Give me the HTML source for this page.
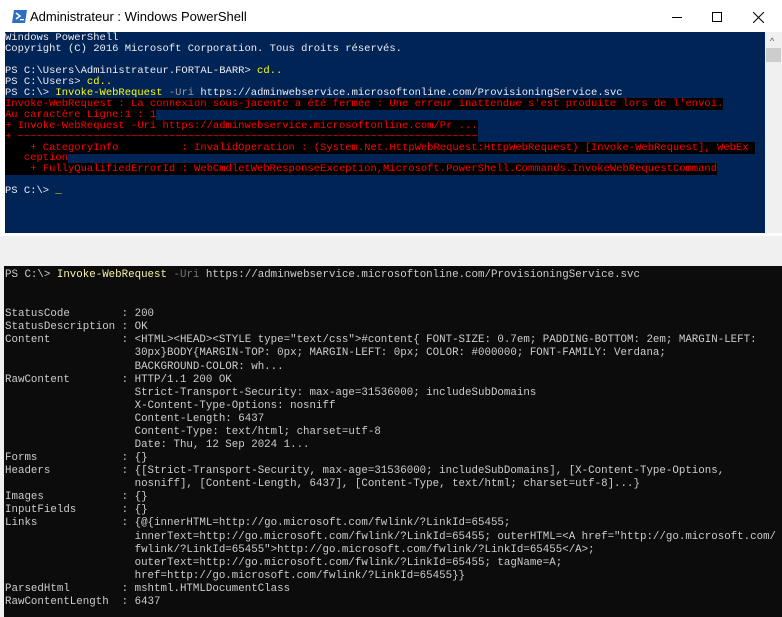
<!DOCTYPE html>
<html><head><meta charset="utf-8"><style>
*{margin:0;padding:0;box-sizing:border-box}
body{width:782px;height:617px;background:#f0f0f0;position:relative;overflow:hidden;font-family:"Liberation Mono",monospace}
#win{position:absolute;left:0;top:0;width:782px;height:236px;background:#fff}
#title{position:absolute;left:30px;top:9px;font:13px "Liberation Sans",sans-serif;color:#000}
#blue{position:absolute;left:5px;top:32px;width:760px;height:201px;background:#012456;overflow:hidden}
#sb{position:absolute;left:765px;top:32px;width:17px;height:201px;background:#f0f0f0}
#blue pre{position:absolute;left:0;top:1px;font-size:10.5px;line-height:10.95px;color:#eeedf0;white-space:pre;font-family:"Liberation Mono",monospace}
.y{color:#ffff00}.g{color:#9a9a9a}
.r{color:#ff0000;background:#000}
#black{position:absolute;left:4px;top:266px;width:778px;height:351px;background:#0c0c0c;overflow:hidden}
#black pre{position:absolute;left:1px;top:3px;font-size:10.8px;line-height:13.08px;color:#cccccc;white-space:pre;font-family:"Liberation Mono",monospace}
.by{color:#f9f1a5}.bg{color:#767676}
</style></head><body>
<div id="win">
<svg style="position:absolute;left:12px;top:10px" width="15" height="13" viewBox="0 0 15 13"><polygon points="2,0 15,0 13,13 0,13" fill="#2f6fc0"/><path d="M4 3 L8 6 L4 9" stroke="#fff" stroke-width="1.5" fill="none"/><rect x="8" y="9" width="4" height="1.3" fill="#fff"/></svg>
<div id="title">Administrateur : Windows PowerShell</div>
<div style="position:absolute;left:672px;top:17px;width:10px;height:1px;background:#000"></div>
<div style="position:absolute;left:712px;top:12px;width:10px;height:10px;border:1px solid #000"></div>
<svg style="position:absolute;left:753px;top:12px" width="11" height="11"><path d="M0 0L11 11M11 0L0 11" stroke="#000" stroke-width="1"/></svg>
<div id="blue"><pre>Windows PowerShell
Copyright (C) 2016 Microsoft Corporation. Tous droits réservés.

PS C:\Users\Administrateur.FORTAL-BARR&gt; <span class="y">cd..</span>
PS C:\Users&gt; <span class="y">cd..</span>
PS C:\&gt; <span class="y">Invoke-WebRequest</span> <span class="g">-Uri</span> https://adminwebservice.microsoftonline.com/ProvisioningService.svc
<span class="r">Invoke-WebRequest : La connexion sous-jacente a été fermée : Une erreur inattendue s'est produite lors de l'envoi.</span>
<span class="r">Au caractère Ligne:1 : 1</span>
<span class="r">+ Invoke-WebRequest -Uri https://adminwebservice.microsoftonline.com/Pr ...</span>
<span class="r">+ ~~~~~~~~~~~~~~~~~~~~~~~~~~~~~~~~~~~~~~~~~~~~~~~~~~~~~~~~~~~~~~~~~~~~~~~~~</span>
<span class="r">    + CategoryInfo          : InvalidOperation : (System.Net.HttpWebRequest:HttpWebRequest) [Invoke-WebRequest], WebEx </span>
<span class="r">   ception</span>
<span class="r">    + FullyQualifiedErrorId : WebCmdletWebResponseException,Microsoft.PowerShell.Commands.InvokeWebRequestCommand</span>

PS C:\&gt; <span class="y">_</span></pre></div>
<div id="sb"><div style="position:absolute;left:5px;top:4px;font:9px 'Liberation Sans';color:#555">^</div><div style="position:absolute;left:1px;top:16px;width:15px;height:14px;background:#cdcdcd"></div></div>
</div>
<div id="black"><pre>PS C:\&gt; <span class="by">Invoke-WebRequest</span> <span class="bg">-Uri</span> https://adminwebservice.microsoftonline.com/ProvisioningService.svc


StatusCode        : 200
StatusDescription : OK
Content           : &lt;HTML&gt;&lt;HEAD&gt;&lt;STYLE type="text/css"&gt;#content{ FONT-SIZE: 0.7em; PADDING-BOTTOM: 2em; MARGIN-LEFT:
                    30px}BODY{MARGIN-TOP: 0px; MARGIN-LEFT: 0px; COLOR: #000000; FONT-FAMILY: Verdana;
                    BACKGROUND-COLOR: wh...
RawContent        : HTTP/1.1 200 OK
                    Strict-Transport-Security: max-age=31536000; includeSubDomains
                    X-Content-Type-Options: nosniff
                    Content-Length: 6437
                    Content-Type: text/html; charset=utf-8
                    Date: Thu, 12 Sep 2024 1...
Forms             : {}
Headers           : {[Strict-Transport-Security, max-age=31536000; includeSubDomains], [X-Content-Type-Options,
                    nosniff], [Content-Length, 6437], [Content-Type, text/html; charset=utf-8]...}
Images            : {}
InputFields       : {}
Links             : {@{innerHTML=http://go.microsoft.com/fwlink/?LinkId=65455;
                    innerText=http://go.microsoft.com/fwlink/?LinkId=65455; outerHTML=&lt;A href="http://go.microsoft.com/
                    fwlink/?LinkId=65455"&gt;http://go.microsoft.com/fwlink/?LinkId=65455&lt;/A&gt;;
                    outerText=http://go.microsoft.com/fwlink/?LinkId=65455; tagName=A;
                    href=http://go.microsoft.com/fwlink/?LinkId=65455}}
ParsedHtml        : mshtml.HTMLDocumentClass
RawContentLength  : 6437</pre></div>
</body></html>
